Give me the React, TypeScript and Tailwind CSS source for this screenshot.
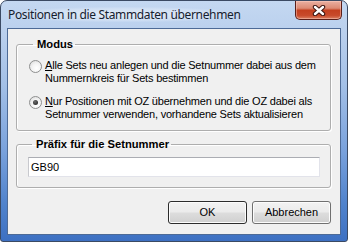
import { useState } from 'react';

function Radio({ checked }: { checked: boolean }) {
  return (
    <span className="relative mt-[1px] flex h-[13px] w-[13px] shrink-0 items-center justify-center rounded-full border border-[#8e8f8f] bg-[radial-gradient(circle_at_60%_65%,#ffffff_0%,#f4f4f4_45%,#d6d6d6_100%)]">
      {checked && (
        <span className="h-[5px] w-[5px] rounded-full bg-[radial-gradient(circle_at_40%_35%,#6c6c6c_0%,#1a1a1a_100%)]" />
      )}
    </span>
  );
}

function GroupBox({ title, className, children }: { title: string; className: string; children: React.ReactNode }) {
  return (
    <fieldset className={`ml-[8px] mr-[9px] rounded-[3px] border border-[#aeaeae] shadow-[inset_1px_1px_0_#ffffff,1px_1px_0_#ffffff] ${className}`}>
      <legend className="ml-[4px] pl-[4px] pr-[2px] text-[11.2px] font-bold leading-[15px] text-black">{title}</legend>
      {children}
    </fieldset>
  );
}

export default function App() {
  const [mode, setMode] = useState(1);
  const [prefix, setPrefix] = useState('GB90');

  return (
    <div className="relative h-[242px] w-[348px] overflow-hidden rounded-t-[7px] rounded-b-[3px] border border-[#3b4a63] bg-[linear-gradient(to_bottom,#c4d8f1_0%,#b9cfed_14%,#a3c0e7_35%,#7aa2dc_62%,#4f82cc_85%,#3d70c2_100%)] font-['Liberation_Sans',sans-serif] text-[11px] text-black">
      {/* title bar */}
      <div className="flex h-[27px] items-center pl-[7px]">
        <span className="rounded-full bg-[radial-gradient(ellipse_at_center,rgba(255,255,255,0.55)_0%,rgba(255,255,255,0.25)_55%,transparent_75%)] px-[2px] -ml-[2px] font-['Noto_Sans',sans-serif] text-[12px] leading-[15px] tracking-[-0.35px] text-[#15202e]">
          Positionen in die Stammdaten übernehmen
        </span>
      </div>
      <button className="absolute right-[5px] top-0 flex h-[19px] w-[47px] items-center justify-center rounded-b-[5px] border border-t-0 border-[#5a1f19] bg-[linear-gradient(to_bottom,#eab0a2_0%,#dc8a74_40%,#c4401f_52%,#c84a2b_80%,#db7f61_100%)] shadow-[inset_0_0_0_1px_rgba(255,210,200,0.45)]">
        <svg width="14" height="11" viewBox="0 0 14 11">
          <path d="M3 2 L11 9 M11 2 L3 9" stroke="#3a1410" strokeWidth="4.4" strokeLinecap="round" fill="none" />
          <path d="M3 2 L11 9 M11 2 L3 9" stroke="#ffffff" strokeWidth="2.4" strokeLinecap="round" fill="none" />
        </svg>
      </button>

      {/* client area */}
      <div className="mx-[6px] flex h-[207px] flex-col border border-[#4d6a96] bg-[#f0f0f0]">
        <GroupBox title="Modus" className="mt-[8px] pb-[9px] pl-[12px] pt-[7px]">
          <label className="flex cursor-default items-start" onClick={() => setMode(0)}>
            <Radio checked={mode === 0} />
            <span className="ml-[3px] leading-[13px] tracking-[-0.2px]">
              <span className="underline underline-offset-[1px]">A</span>lle Sets neu anlegen und die Setnummer dabei aus dem
              <br />
              Nummernkreis für Sets bestimmen
            </span>
          </label>
          <label className="mt-[10px] flex cursor-default items-start" onClick={() => setMode(1)}>
            <Radio checked={mode === 1} />
            <span className="ml-[3px] leading-[13px] tracking-[-0.2px]">
              <span className="underline underline-offset-[1px]">N</span>ur Positionen mit OZ übernehmen und die OZ dabei als
              <br />
              Setnummer verwenden, vorhandene Sets aktualisieren
            </span>
          </label>
        </GroupBox>

        <GroupBox title="Präfix für die Setnummer" className="mt-[6px] pb-[10px] pl-[11px] pt-[5px]">
          <input
            value={prefix}
            onChange={(e) => setPrefix(e.target.value)}
            className="h-[20px] w-[292px] border border-[#e2e3ea] border-t-[#abadb3] border-l-[#c8c9ce] bg-white px-[2px] text-[11px] outline-none"
          />
        </GroupBox>

        <div className="mr-[9px] mt-[13px] flex justify-end gap-[5px]">
          <button className="h-[23px] w-[79px] rounded-[3px] border border-[#2c2c2c] bg-[linear-gradient(to_bottom,#f2f2f2_0%,#ebebeb_48%,#dddddd_52%,#cfcfcf_100%)] shadow-[inset_0_0_0_1px_#fcfcfc] text-[11px]">
            OK
          </button>
          <button className="h-[23px] w-[79px] rounded-[3px] border border-[#707070] bg-[linear-gradient(to_bottom,#f2f2f2_0%,#ebebeb_48%,#dddddd_52%,#cfcfcf_100%)] shadow-[inset_0_0_0_1px_#fcfcfc] text-[11px]">
            Abbrechen
          </button>
        </div>
      </div>
    </div>
  );
}
